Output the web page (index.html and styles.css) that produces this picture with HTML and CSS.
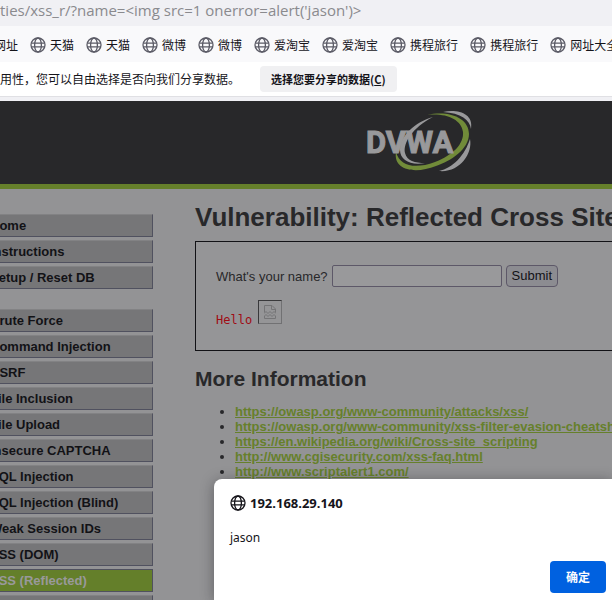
FILE: index.html
```html
<!DOCTYPE html>
<html lang="zh-CN">
<head>
<meta charset="utf-8">
<title>Vulnerability: Reflected Cross Site</title>
<link rel="stylesheet" href="styles.css">
</head>
<body>
<svg class="defs" aria-hidden="true">
  <symbol id="globe" viewBox="0 0 16 16">
    <g fill="none" stroke="currentColor" stroke-width="1.3">
      <circle cx="8" cy="8" r="7"/>
      <ellipse cx="8" cy="8" rx="3.4" ry="7"/>
      <path d="M1.2 6.2h13.6M1.2 9.8h13.6"/>
    </g>
  </symbol>
</svg>
<div class="address">ties/xss_r/?name=&lt;img src=1 onerror=alert('jason')&gt;</div>
<nav class="bookmarks">
  <a href="#">网址</a>
  <a href="#"><svg class="globe"><use href="#globe"/></svg>天猫</a>
  <a href="#"><svg class="globe"><use href="#globe"/></svg>天猫</a>
  <a href="#"><svg class="globe"><use href="#globe"/></svg>微博</a>
  <a href="#"><svg class="globe"><use href="#globe"/></svg>微博</a>
  <a href="#"><svg class="globe"><use href="#globe"/></svg>爱淘宝</a>
  <a href="#"><svg class="globe"><use href="#globe"/></svg>爱淘宝</a>
  <a href="#"><svg class="globe"><use href="#globe"/></svg>携程旅行</a>
  <a href="#"><svg class="globe"><use href="#globe"/></svg>携程旅行</a>
  <a href="#"><svg class="globe"><use href="#globe"/></svg>网址大全</a>
</nav>
<div class="notice">
  <span>用性，您可以自由选择是否向我们分享数据。</span>
  <button type="button">选择您要分享的数据(<u>C</u>)</button>
</div>
<header class="banner">
  <svg class="logo" viewBox="0 0 110 64" role="img" aria-label="DVWA">
    <path fill="#99999b" d="M80 1C94-2 111 2 108 18C107 9 98 2 80 1Z"/>
    <path fill="#99999b" d="M107 28C110 43 96 62 76 60C90 57 102 44 107 28Z"/>
    <path fill="#99999b" d="M70 6C49 17 40 32 42 42C44 50 52 52 62 52C48 55 37 49 37 39C37 25 52 11 70 6Z"/>
    <path fill="#718b39" d="M64 4C86-1 106 7 106 23C106 38 88 50 73 55C53 63 30 60 33 41C37 56 53 58 72 51C90 44 101 33 100 21C98 8 83 2 64 4Z"/>
    <text class="logo-text" x="3" y="42">DVWA</text>
  </svg>
</header>
<div class="page">
  <nav class="menu">
    <ul>
      <li><a href="#">Home</a></li>
      <li><a href="#">Instructions</a></li>
      <li><a href="#">Setup / Reset DB</a></li>
    </ul>
    <ul>
      <li><a href="#">Brute Force</a></li>
      <li><a href="#">Command Injection</a></li>
      <li><a href="#">CSRF</a></li>
      <li><a href="#">File Inclusion</a></li>
      <li><a href="#">File Upload</a></li>
      <li><a href="#">Insecure CAPTCHA</a></li>
      <li><a href="#">SQL Injection</a></li>
      <li><a href="#">SQL Injection (Blind)</a></li>
      <li><a href="#">Weak Session IDs</a></li>
      <li><a href="#">XSS (DOM)</a></li>
      <li><a class="selected" href="#">XSS (Reflected)</a></li>
      <li><a href="#">XSS (Stored)</a></li>
    </ul>
  </nav>
  <main>
    <h1>Vulnerability: Reflected Cross Site</h1>
    <div class="box">
      <form>
        <label for="name">What's your name?</label>
        <input id="name" type="text">
        <button type="button">Submit</button>
      </form>
      <div class="result">
        <pre>Hello</pre>
        <span class="broken"><svg viewBox="0 0 12 14" fill="none" stroke="#747476"><path d="M.5 7.5V.5H8L11.5 4V7.5M7.5.5V4.5H11.5M0 8.5L2 6.5L4 8.5L6 6.5L8 8.5L10 6.5L12 8.5M.5 13.5V11L2 9.5L4 11.5L6 9.5L8 11.5L10 9.5L11.5 11V13.5Z"/></svg></span>
      </div>
    </div>
    <h2>More Information</h2>
    <ul class="links">
      <li><a href="#">https://owasp.org/www-community/attacks/xss/</a></li>
      <li><a href="#">https://owasp.org/www-community/xss-filter-evasion-cheatsheet</a></li>
      <li><a href="#">https://en.wikipedia.org/wiki/Cross-site_scripting</a></li>
      <li><a href="#">http://www.cgisecurity.com/xss-faq.html</a></li>
      <li><a href="#">http://www.scriptalert1.com/</a></li>
    </ul>
  </main>
</div>
<div class="dialog" role="dialog" aria-labelledby="origin">
  <div class="origin"><svg class="globe"><use href="#globe"/></svg><strong id="origin">192.168.29.140</strong></div>
  <p>jason</p>
  <button type="button">确定</button>
</div>
</body>
</html>
```
FILE: styles.css
```css
* { box-sizing: border-box; }
body {
  margin: 0;
  height: 100vh;
  overflow: hidden;
  display: flex;
  flex-direction: column;
  position: relative;
  background: #939395;
  color: #28282a;
  font: 13px/15px "Liberation Sans", sans-serif;
}
ul, h1, h2, p, pre { margin: 0; padding: 0; }
.defs { position: absolute; width: 0; height: 0; }
.globe { width: 16px; height: 16px; flex: none; }

.address {
  flex: none;
  height: 26px;
  background: #f0f0f4;
  color: #8a8a8e;
  font: 15px/20px "Open Sans", "Noto Sans", sans-serif;
  white-space: nowrap;
}
.bookmarks {
  flex: none;
  display: flex;
  align-items: center;
  gap: 12px;
  height: 36px;
  padding-top: 1px;
  background: #f9f9fb;
  font: 12px/16px "Noto Sans CJK SC", sans-serif;
}
.bookmarks a {
  flex: none;
  display: flex;
  align-items: center;
  gap: 4px;
  color: #15141a;
  text-decoration: none;
}
.bookmarks a:first-child { margin-left: -6px; }
.bookmarks .globe { color: #5b5b66; }
.notice {
  flex: none;
  display: flex;
  align-items: center;
  gap: 20px;
  height: 35px;
  background: #fff;
  border-bottom: 1px solid #e0e0e4;
  color: #15141a;
  font: 12px/16px "Noto Sans CJK SC", sans-serif;
  white-space: nowrap;
}
.notice button {
  height: 26px;
  padding: 0 11px;
  border: 0;
  border-radius: 4px;
  background: #f0f0f2;
  color: #15141a;
  font: bold 11px/16px "Noto Sans CJK SC", sans-serif;
}
.banner {
  flex: none;
  height: 92px;
  padding: 10px 0 0 363px;
  border-top: 4px solid #f0f0f4;
  border-bottom: 5px solid #66802b;
  background: #28282a;
}
.logo { display: block; width: 110px; height: 64px; overflow: visible; }
.logo-text {
  fill: #99999b;
  stroke: #99999b;
  stroke-width: 1px;
  font: bold 31px "Roboto", sans-serif;
}

.page { flex: 1; display: flex; min-height: 0; }
.menu { flex: none; width: 153px; padding-top: 25px; font-weight: bold; }
.menu ul { margin: 0 0 20px -21px; list-style: none; }
.menu li + li { margin-top: 3px; }
.menu a {
  display: block;
  padding: 3px 10px;
  border: 1px solid #50515f;
  border-top-color: #828284;
  background: #767678;
  color: #121216;
  line-height: 16px;
  text-decoration: none;
  height: 23px;
}
.menu .selected { border-top-color: #50515f; background: #647f2a; color: #99999b; }
main { flex: 1; min-width: 0; padding: 12px 0 0 42px; white-space: nowrap; }
h1 { font-size: 26px; line-height: 32px; }
.box {
  margin: 8px -20px 0 0;
  height: 110px;
  padding: 23px 20px 0;
  border: 1px solid #121216;
  background: #959597;
}
form { display: flex; align-items: center; gap: 4px; }
input {
  width: 170px;
  height: 22px;
  border: 1px solid #5d5868;
  border-radius: 2px;
  background: #99999b;
}
form button {
  height: 22px;
  padding: 0 5px;
  border: 1px solid #5d5868;
  border-radius: 4px;
  background: #8c8c91;
  color: #121216;
  font: 13px/18px "Liberation Sans", sans-serif;
}
.result { display: flex; align-items: flex-end; gap: 6px; margin-top: 13px; }
pre { color: #a00c14; font: 12px/14px "DejaVu Sans Mono", monospace; height: 11px; }
.broken {
  width: 24px;
  height: 24px;
  padding: 4px 5px;
  border: 1px solid #717173;
  border-top-color: #39393b;
  border-left-color: #39393b;
}
.broken svg { display: block; width: 12px; height: 14px; }
h2 { margin-top: 16px; font-size: 21px; line-height: 24px; }
.links { margin: 13px 0 0; padding-left: 40px; font-weight: bold; }
.links a { color: #66802b; }

.dialog {
  position: absolute;
  inset: 479px 0 0 214px;
  padding: 16px 6px 0 16px;
  display: flex;
  flex-direction: column;
  background: #fff;
  border-radius: 8px 0 0 0;
  box-shadow: 0 2px 14px rgba(20, 20, 26, 0.4);
  color: #15141a;
  font: 12px/16px "Noto Sans", sans-serif;
}
.origin { display: flex; align-items: center; gap: 4px; }
.origin strong { font: bold 13px/16px "Noto Sans", sans-serif; }
.dialog p { margin-top: 19px; }
.dialog button {
  align-self: flex-end;
  width: 56px;
  height: 32px;
  margin-top: 15px;
  border: 0;
  border-radius: 4px;
  background: #0061e0;
  color: #fbfbfe;
  font: bold 12px/16px "Noto Sans CJK SC", sans-serif;
}
```
